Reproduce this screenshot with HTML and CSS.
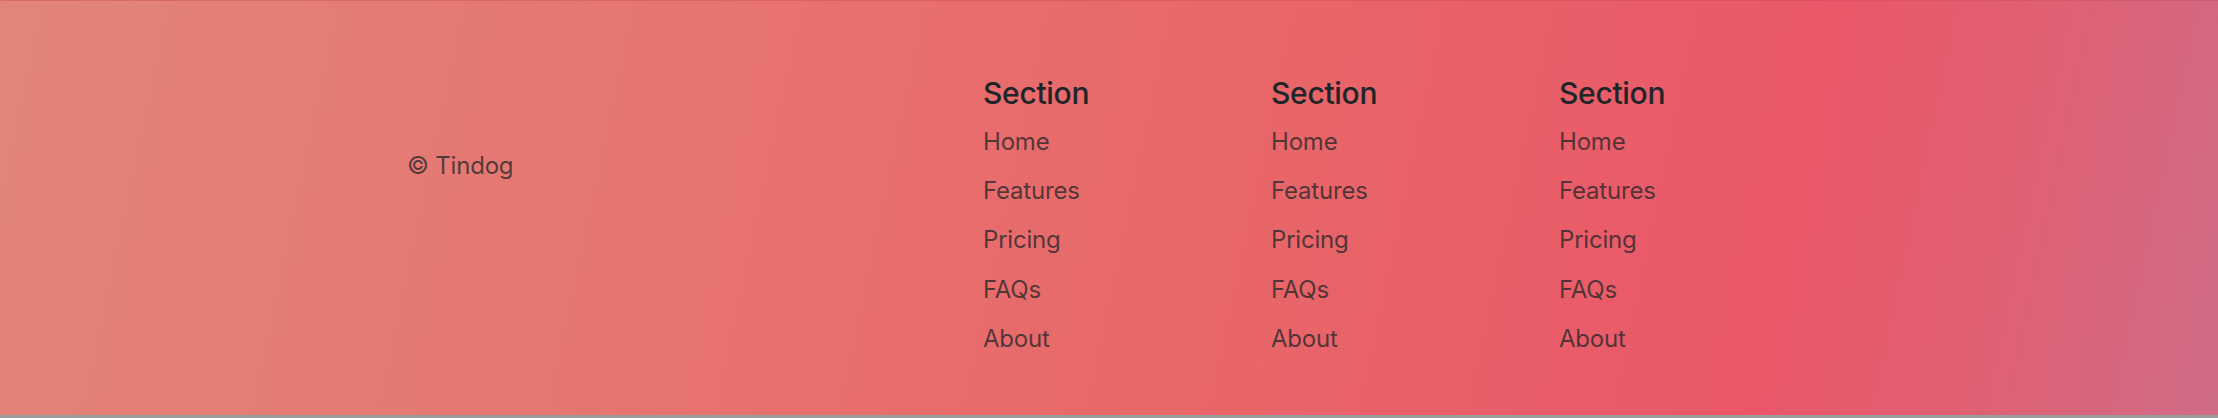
FILE: index.html
```html
<!DOCTYPE html>
<html lang="en">
<head>
<meta charset="utf-8">
<title>Tindog Footer</title>
<link rel="stylesheet" href="styles.css">
</head>
<body>
<footer class="footer">
  <div class="container">
    <div class="col">
      <a class="logo" href="#"></a>
      <p class="copy">© Tindog</p>
    </div>
    <div class="col"></div>
    <div class="col">
      <h5 class="heading">Section</h5>
      <ul class="nav">
        <li class="nav-item"><a class="nav-link" href="#">Home</a></li>
        <li class="nav-item"><a class="nav-link" href="#">Features</a></li>
        <li class="nav-item"><a class="nav-link" href="#">Pricing</a></li>
        <li class="nav-item"><a class="nav-link" href="#">FAQs</a></li>
        <li class="nav-item"><a class="nav-link" href="#">About</a></li>
      </ul>
    </div>
    <div class="col">
      <h5 class="heading">Section</h5>
      <ul class="nav">
        <li class="nav-item"><a class="nav-link" href="#">Home</a></li>
        <li class="nav-item"><a class="nav-link" href="#">Features</a></li>
        <li class="nav-item"><a class="nav-link" href="#">Pricing</a></li>
        <li class="nav-item"><a class="nav-link" href="#">FAQs</a></li>
        <li class="nav-item"><a class="nav-link" href="#">About</a></li>
      </ul>
    </div>
    <div class="col">
      <h5 class="heading">Section</h5>
      <ul class="nav">
        <li class="nav-item"><a class="nav-link" href="#">Home</a></li>
        <li class="nav-item"><a class="nav-link" href="#">Features</a></li>
        <li class="nav-item"><a class="nav-link" href="#">Pricing</a></li>
        <li class="nav-item"><a class="nav-link" href="#">FAQs</a></li>
        <li class="nav-item"><a class="nav-link" href="#">About</a></li>
      </ul>
    </div>
  </div>
</footer>
</body>
</html>
```
FILE: styles.css
```css
html, body {
  margin: 0;
  padding: 0;
}
body {
  background: #9b9b9b;
  font-family: Inter, "Noto Sans", "Liberation Sans", sans-serif;
  font-size: 24px;
  line-height: 36px;
  color: #212529;
}
.footer {
  height: 415px;
  box-sizing: border-box;
  padding-top: 74px;
  border-top: 1px solid rgba(200, 70, 80, 0.35);
  background: linear-gradient(102deg, #e1857a 0%, #e7736f 33%, #e86568 58%, #ea5769 80%, #df6175 90%, #cf6c86 100%);
}
.container {
  width: 1440px;
  margin: 0 auto;
  display: grid;
  grid-template-columns: repeat(5, 288px);
}
.col {
  padding: 0 18px;
}
.logo {
  display: block;
  height: 48px;
  margin-bottom: 25px;
}
.copy {
  margin: 0;
  color: rgba(33, 37, 41, 0.75);
  letter-spacing: -0.2px;
}
.heading {
  margin: 0 0 13px;
  font-size: 30px;
  line-height: 36px;
  font-weight: 500;
  color: #212529;
  letter-spacing: -0.3px;
}
.nav {
  list-style: none;
  margin: 0;
  padding: 0;
  display: flex;
  flex-direction: column;
}
.nav-item {
  margin-bottom: 13.2px;
}
.nav-link {
  display: block;
  color: rgba(33, 37, 41, 0.75);
  text-decoration: none;
  letter-spacing: -0.2px;
}
```
